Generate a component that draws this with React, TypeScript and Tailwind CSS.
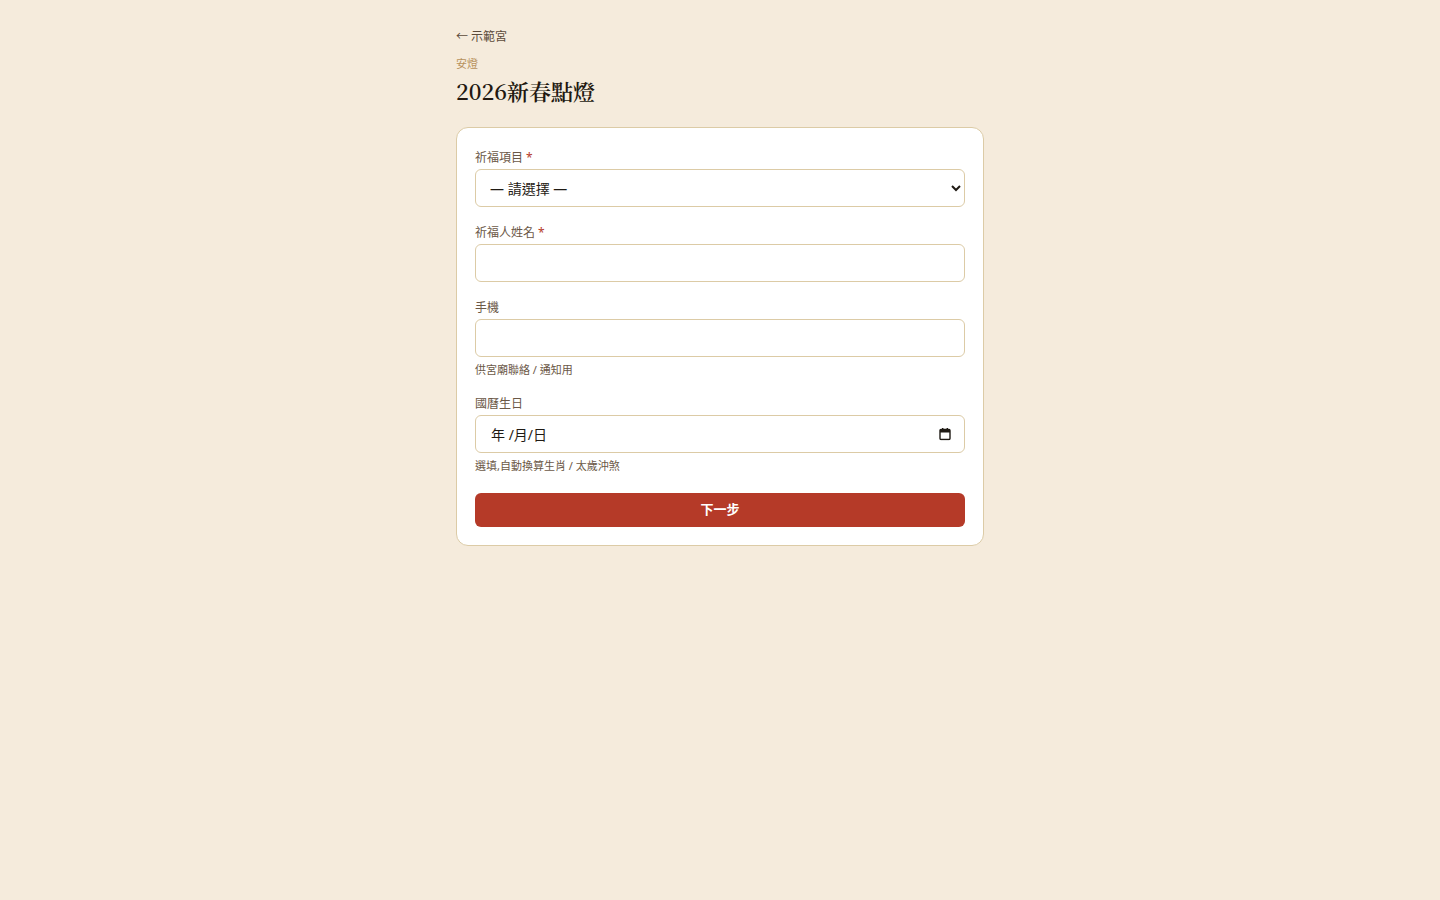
import { useState } from "react";

const sans = '"Noto Sans", "Noto Sans CJK TC", sans-serif';
const serif = '"Noto Serif CJK TC", "Noto Serif TC", "Liberation Serif", "Noto Sans CJK TC", serif';

function Label({ text, required }: { text: string; required?: boolean }) {
  return (
    <label className="mb-[3px] block text-xs leading-4 text-[#6b5847]">
      {text}
      {required && <span className="ml-[3px] text-[#b53a28]">*</span>}
    </label>
  );
}

const boxCls =
  "h-[38px] w-full rounded-md border border-[#dccba6] bg-white text-sm text-[#1f1a14] outline-none focus:border-[#b53a28]";

function CalendarIcon() {
  return (
    <svg width="12" height="13" viewBox="0 0 12 13" fill="none">
      <rect x="1" y="2" width="10" height="10" rx="1" stroke="#1f1a14" strokeWidth="1.4" />
      <rect x="1" y="2" width="10" height="3" fill="#1f1a14" />
      <rect x="3" y="0.5" width="1.4" height="2" fill="#1f1a14" />
      <rect x="7.6" y="0.5" width="1.4" height="2" fill="#1f1a14" />
    </svg>
  );
}

export default function App() {
  const [item, setItem] = useState("");
  const [name, setName] = useState("");
  const [phone, setPhone] = useState("");
  const [birthday, setBirthday] = useState("");
  const [dateFocus, setDateFocus] = useState(false);

  return (
    <div className="min-h-screen bg-[#f5ebdc]" style={{ fontFamily: sans }}>
      <div className="mx-auto w-[528px] pt-[29px]">
        <a href="#" className="block text-xs leading-4 text-[#5b4a3a]">
          ← 示範宮
        </a>
        <p className="mt-[11px] text-[11px] leading-4 text-[#b8925c]">安燈</p>
        <h1
          className="mt-[4px] text-[22px] font-semibold leading-[30px] text-[#221810]"
          style={{ fontFamily: serif }}
        >
          2026新春點燈
        </h1>

        <form className="mt-[21px] flex flex-col gap-[18px] rounded-xl border border-[#dccba6] bg-white px-[18px] pt-[22px] pb-[18px]">
          <div>
            <Label text="祈福項目" required />
            <select
              value={item}
              onChange={(e) => setItem(e.target.value)}
              className={boxCls + " pl-[10px] pr-[6px]"}
            >
              <option value="">— 請選擇 —</option>
              <option value="guangming">光明燈</option>
              <option value="taisui">太歲燈</option>
              <option value="wenchang">文昌燈</option>
            </select>
          </div>

          <div>
            <Label text="祈福人姓名" required />
            <input value={name} onChange={(e) => setName(e.target.value)} className={boxCls + " px-[15px]"} />
          </div>

          <div>
            <Label text="手機" />
            <input
              type="tel"
              value={phone}
              onChange={(e) => setPhone(e.target.value)}
              className={boxCls + " px-[15px]"}
            />
            <p className="mt-[5px] text-[11px] leading-4 text-[#6b5847]">供宮廟聯絡 / 通知用</p>
          </div>

          <div>
            <Label text="國曆生日" />
            <div className="relative">
              <input
                type={dateFocus || birthday ? "date" : "text"}
                placeholder="年 /月/日"
                value={birthday}
                onFocus={() => setDateFocus(true)}
                onBlur={() => setDateFocus(false)}
                onChange={(e) => setBirthday(e.target.value)}
                className={boxCls + " px-[15px] placeholder:text-[#1f1a14]"}
              />
              {!dateFocus && !birthday && (
                <span className="pointer-events-none absolute right-[14px] top-1/2 flex -translate-y-1/2">
                  <CalendarIcon />
                </span>
              )}
            </div>
            <p className="mt-[5px] text-[11px] leading-4 text-[#6b5847]">選填,自動換算生肖 / 太歲沖煞</p>
          </div>

          <button
            type="button"
            className="mt-[1px] h-[34px] w-full rounded-md bg-[#b53a28] text-[13px] font-bold text-white"
          >
            下一步
          </button>
        </form>
      </div>
    </div>
  );
}
